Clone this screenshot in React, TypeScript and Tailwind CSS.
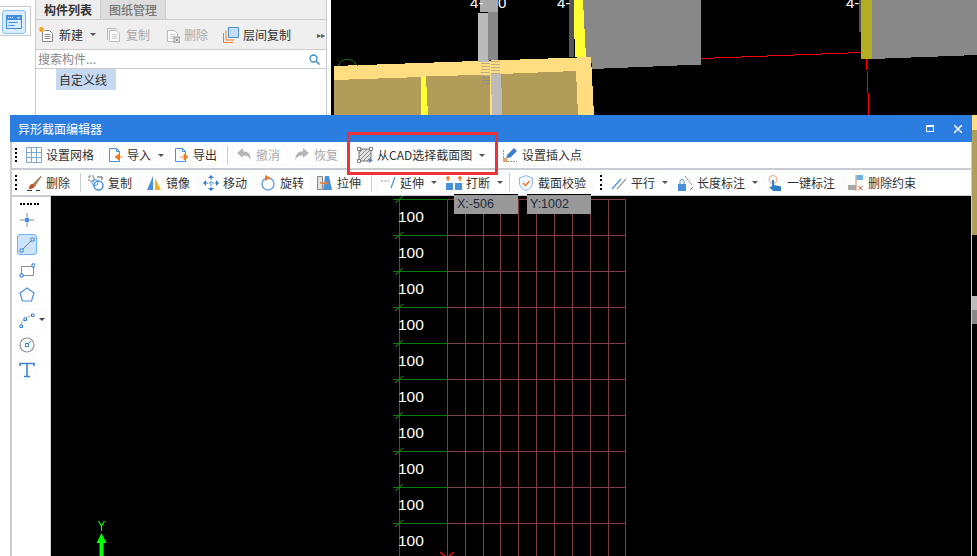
import type { ReactNode } from "react";

const Svg = ({ children, w = 16, h = 16 }: { children: ReactNode; w?: number; h?: number }) => (
  <svg width={w} height={h} viewBox={`0 0 ${w} ${h}`} fill="none" className="shrink-0">
    {children}
  </svg>
);

const blue = "#4a90d9";
const orange = "#f47b20";
const grey = "#8a9097";

const Page = ({ left }: { left?: boolean }) => (
  <Svg>
    <path d="M2.500 1.500h7l3 3v10h-10z" fill="#fff" stroke={blue} />
    <path d="M9.500 1.500v3h3" stroke={blue} />
    {left ? (
      <path d="M16 10h-5M8 10l4-3v6z" fill={orange} stroke={orange} strokeWidth=".8" />
    ) : (
      <path d="M7 10h5M15 10l-4-3v6z" fill={orange} stroke={orange} strokeWidth=".8" />
    )}
  </Svg>
);

const GreyDoc = ({ mark }: { mark?: "new" | "copy" | "del" }) => (
  <Svg>
    {mark === "copy" && <path d="M1.500 13V1.500H10" stroke="#bbb" />}
    <path d="M3.500 3.500h7l3 3v8h-10z" fill="#fff" stroke={mark === "new" ? "#888" : "#bbb"} />
    <path d="M5.500 7.500h6M5.500 9.500h6M5.500 11.500h6" stroke={mark === "new" ? "#888" : "#ccc"} />
    {mark === "new" && <path d="M0 0h5v5H0z" fill="#f2a32c" stroke="#fff" strokeDasharray="1 1" />}
    {mark === "del" && <path d="M10 10h6v6h-6z M11.500 11.500l3 3M14.500 11.500l-3 3" fill="#ddd" stroke="#999" />}
  </Svg>
);

const icons = {
  grid: (
    <Svg>
      <path d="M.5.5h15v15H.5zM5.500.5v15M10.500.5v15M.5 5.500h15M.5 10.500h15" stroke="#7ba7d6" />
    </Svg>
  ),
  undo: (
    <Svg>
      <path d="M1 6l6-5v3.200c5 0 8 2.800 7.500 9-1-3.500-3.500-4.700-7.500-4.700V11z" fill="#b5b5b5" />
    </Svg>
  ),
  redo: (
    <Svg>
      <path d="M15 6L9 1v3.200c-5 0-8 2.800-7.500 9 1-3.500 3.500-4.700 7.500-4.700V11z" fill="#b5b5b5" />
    </Svg>
  ),
  hatch: (
    <Svg>
      <path d="M2 2h12v12H2z" fill="#e4e4e4" stroke="#777" />
      <path d="M2 6l4-4M2 10l8-8M2 14L14 2M6 14l8-8M10 14l4-4" stroke="#888" />
      <path d="M.5.5h3v3h-3zM12.500.5h3v3h-3zM.5 12.500h3v3h-3z" fill="#fff" stroke="#666" strokeWidth=".8" />
      <path d="M12 11l4 2.500-4 2.500z" fill={blue} />
    </Svg>
  ),
  insert: (
    <Svg>
      <path d="M1.500 3v11.500H15" stroke="#999" strokeDasharray="2 1" />
      <path d="M4 11l1.500-3.500L12 1l3 3-6.500 6.500z" fill="#3f7fc9" />
      <path d="M1 11h4v4H1z" fill="#e8a070" />
    </Svg>
  ),
  brush: (
    <Svg>
      <path d="M15 1L7 9l2 2 6-9z" fill="#b08a55" stroke="#7d6238" strokeWidth=".5" />
      <path d="M7 9c-3 0-4 2-4 5 2 0 5-.5 6-3z" fill="#c4532b" />
      <path d="M1 15.500h5M10 15.500h4" stroke="#333" />
    </Svg>
  ),
  copy: (
    <Svg>
      <path d="M1 1h5v5H1z" stroke="#777" strokeDasharray="2 1" />
      <circle cx="10.500" cy="10.500" r="4.500" stroke={blue} strokeWidth="1.500" />
      <circle cx="7" cy="7.500" r="3" stroke={blue} />
      <path d="M9 2h5v3" stroke="#555" />
    </Svg>
  ),
  mirror: (
    <Svg>
      <path d="M7 1v14H1z" fill={blue} />
      <path d="M9 3v12h6z" fill="#eeb32b" />
    </Svg>
  ),
  move: (
    <Svg>
      <path d="M8 0l3 3H5zM8 16l3-3H5zM0 8l3-3v6zM16 8l-3-3v6z" fill="#2f7fd2" />
      <path d="M8 3v10M3 8h10" stroke="#2f7fd2" strokeDasharray="2 1" />
    </Svg>
  ),
  rotate: (
    <Svg>
      <circle cx="8" cy="9" r="6" stroke="#6aa5e0" strokeWidth="1.500" />
      <path d="M5 0l6 3-6 3z" fill={orange} />
    </Svg>
  ),
  stretch: (
    <Svg>
      <path d="M.5 1.500h5v13h-5z" fill="#e2e2e2" stroke="#888" />
      <path d="M8 1h4l3 14H6z" fill="#4a90d9" />
      <path d="M3 8h7" stroke={orange} strokeWidth="1.500" />
      <path d="M8 5l3 3-3 3z" fill={orange} />
    </Svg>
  ),
  extend: (
    <Svg>
      <path d="M1 6h8" stroke="#888" strokeDasharray="2 1.500" />
      <path d="M15 2L11 13" stroke={blue} strokeWidth="1.200" />
    </Svg>
  ),
  cut: (
    <Svg>
      <path d="M0 8h7v7H0zM9 8h7v7H9z" fill={blue} />
      <path d="M2 1v5M0 3h4M14 1v5M12 3h4" stroke={orange} strokeWidth="1.500" />
    </Svg>
  ),
  shield: (
    <Svg>
      <path d="M8 .5l6.500 2.500v5c0 4-3 6.500-6.500 7.500C4.500 14.500 1.500 12 1.500 8V3z" fill="#eef5fd" stroke="#8bb6e6" />
      <path d="M5 8l2.500 2.500L11.500 6" stroke={orange} strokeWidth="1.500" />
    </Svg>
  ),
  parallel: (
    <Svg>
      <path d="M1 14L10 4" stroke={blue} strokeWidth="1.300" />
      <path d="M6 14l9-10" stroke="#9a9a9a" strokeWidth="1.300" />
    </Svg>
  ),
  lock: (
    <Svg>
      <path d="M1 9h8v7H1z" fill={blue} />
      <path d="M3 9V6.500a2 2 0 014 0V9" stroke={blue} />
      <path d="M8 1l7 9" stroke="#777" strokeDasharray="2 1" />
      <path d="M13 15l3-3" stroke="#777" />
    </Svg>
  ),
  hand: (
    <Svg>
      <circle cx="6" cy="4.500" r="4" stroke="#eda27a" />
      <path d="M5 5h2v5l7 1.500V16H6l-4-4 3-.5z" fill="#2f7fc4" />
    </Svg>
  ),
  flag: (
    <Svg>
      <path d="M8 0v16" stroke="#d9813a" />
      <path d="M8.500 0H15v5H8.500z" fill="#6fb0ee" />
      <path d="M0 10h8v5H0z" fill="#a9a9a9" />
      <path d="M10.500 11l4 4M14.500 11l-4 4" stroke="#d8352c" />
    </Svg>
  ),
};

const Arrow = () => (
  <span className="ml-[7px] h-0 w-0 border-x-[3px] border-t-[3px] border-x-transparent border-t-[#555]" />
);

type BtnProps = {
  icon: ReactNode;
  label: string;
  arrow?: boolean;
  off?: boolean;
  className: string;
};

const Btn = ({ icon, label, arrow, off, className }: BtnProps) => (
  <div className={`flex h-[21px] shrink-0 items-center rounded-[3px] border border-[#f9f9f9] ${className}`}>
    {icon}
    <span className={`ml-[4px] whitespace-nowrap text-xs leading-none ${off ? "text-[#aaa]" : "text-[#333]"}`}>{label}</span>
    {arrow && <Arrow />}
  </div>
);

const Grip = () => (
  <div className="ml-[3px] mr-[3px] flex h-[15px] w-[2px] shrink-0 flex-col justify-between">
    {[0, 1, 2, 3].map((i) => (
      <span key={i} className="h-[2px] w-[2px] bg-black" />
    ))}
  </div>
);

const Sep = ({ className = "" }: { className?: string }) => <span className={`mx-px h-[19px] w-px shrink-0 bg-[#ccc] ${className}`} />;

const LeftTool = ({ children, active, wide }: { children: ReactNode; active?: boolean; wide?: boolean }) => (
  <div
    className={`flex h-[21px] items-center rounded-[3px] border pl-[1px] ${wide ? "w-[29px]" : "w-[20px]"} ${
      active ? "border-[#6db2f5] bg-[#cce4ff]" : "border-[#f9f9f9]"
    }`}
  >
    {children}
  </div>
);

const Background3D = () => (
  <svg viewBox="331 0 646 556" className="h-[556px] w-[646px] bg-black" shapeRendering="crispEdges">
    <path d="M334 66L591 57L594 115H334z" fill="#ffdd80" />
    <path d="M334 80L421 77V115H334zM426 76.500L490 74.500V115H426zM501 74L576 71L578 115H501z" fill="#b19d59" />
    <path d="M421 77h5l2 38h-7z" fill="#ffff33" />
    <path d="M480 0h18v12h-18z" fill="#aaa" />
    <path d="M478 13h11v49h-11z" fill="#bbb" />
    <path d="M488 12h10v48h-10z" fill="#888" />
    <path d="M491 74h10l1.500 41H492z" fill="#bbb" />
    {[63, 66, 69, 72, 75].map((y) => (
      <path key={y} d={`M481 ${y}h9M491 ${y - 2}h9`} stroke="#bcae8a" />
    ))}
    {[77, 80, 83].map((y) => (
      <path key={y} d={`M482 ${y}h8`} stroke="#8d8d8d" />
    ))}
    <path d="M569 0h5v57h-5z" fill="#555" />
    <path d="M583 0h118v64.500L592 69L591 57H586z" fill="#888" />
    <path d="M573.500 0H583L586 57H575z" fill="#ffff33" />
    <path d="M701 58.500L861 52.500" stroke="#f00" strokeWidth="1" />
    <path d="M866.500 59L869 115" stroke="#f00" strokeWidth="1" />
    <path d="M859 0h3v32h-3z" fill="#555" />
    <path d="M872 0H977V55L872 59z" fill="#888" />
    <path d="M861 0H872V59H861z" fill="#b2ad22" />
    <path d="M338 66c3-5 7-7 10-7s6 2 10 7" stroke="#0a6a0a" fill="none" />
    <path d="M972 115h5v15h-5z" fill="#ffdd80" />
    <path d="M972 130h5v105h-5z" fill="#b19d59" />
    <path d="M972 296h5v14h-5z" fill="#bbb" />
    <path d="M972 310h5v14h-5z" fill="#888" />
    <g fill="#fff" fontFamily="Liberation Sans, sans-serif" fontSize="15" shapeRendering="auto">
      <text x="470" y="8">4-</text>
      <text x="498" y="8">0</text>
      <text x="557" y="8">4-</text>
      <text x="846" y="8">4-</text>
    </g>
  </svg>
);

const rows = [0, 1, 2, 3, 4, 5, 6, 7, 8, 9];
const cols = [447, 465, 483, 500, 518, 536, 554, 572, 590, 608, 625];

const Canvas = () => (
  <svg viewBox="51 196 920 360" className="h-[360px] w-[920px] bg-black">
    <g shapeRendering="crispEdges">
      {rows.map((i) => (
        <path key={i} d={`M447 ${199.5 + 36 * i}H625`} stroke="#803c44" />
      ))}
      {cols.map((x) => (
        <path key={x} d={`M${x + 0.5} 199V556`} stroke="#803c44" />
      ))}
      <path d="M399.500 199V556" stroke="#008000" />
      {rows.map((i) => (
        <path key={i} d={`M393 ${199.5 + 36 * i}H447`} stroke="#008000" />
      ))}
    </g>
    {rows.map((i) => (
      <g key={i}>
        <path d={`M395 ${203 + 36 * i}L403 ${196 + 36 * i}`} stroke="#1d9a1d" />
        <text x="398" y={222 + 36 * i} fill="#fff" fontSize="15.500" fontFamily="Liberation Sans, sans-serif">
          100
        </text>
      </g>
    ))}
    <path d="M440 552l5 4M454 552l-5 4" stroke="#f00" strokeWidth="1.500" />
    <path d="M99.500 543h4v13h-4zM101.500 533l5 10h-10z" fill="#00ff00" />
    <path d="M101.500 531v-5M101.500 526l-3-5M101.500 526l3-5" stroke="#00ff00" strokeWidth="1.200" fill="none" />
  </svg>
);

const Editor = () => (
  <div className="absolute left-[10px] top-[115px] flex h-[441px] w-[962px] flex-col border-r border-l-2 border-[#c8ccd0] bg-[#c8ccd0]">
    <div className="-ml-[2px] -mr-px flex h-[27px] shrink-0 items-center bg-[#2b7de0] pl-[8px] pr-[10px] text-white">
      <span className="text-xs leading-none">异形截面编辑器</span>
      <span className="ml-auto h-[7px] w-[8px] border border-t-2 border-white" />
      <svg width="8" height="8" viewBox="0 0 8 8" className="ml-[20px]">
        <path d="M0 0l8 8M8 0L0 8" stroke="#fff" strokeWidth="1.500" />
      </svg>
    </div>

    <div className="flex h-[26px] shrink-0 items-center gap-[2px] bg-white">
      <Grip />
      <Btn className="w-[79px] pl-[3px]" icon={icons.grid} label="设置网格" />
      <Btn className="w-[64px] pl-[3px]" icon={<Page left />} label="导入" arrow />
      <Btn className="w-[55px] pl-[3px]" icon={<Page />} label="导出" />
      <Sep />
      <Btn className="ml-px w-[55px] pl-[3px]" icon={icons.undo} label="撤消" off />
      <Btn className="ml-px w-[56px] pl-[3px]" icon={icons.redo} label="恢复" off />
      <Btn className="ml-[3px] w-[142px] pl-[5px]" icon={icons.hatch} label="从CAD选择截面图" arrow />
      <Sep className="ml-0" />
      <Btn className="w-[90px] pl-[2px]" icon={icons.insert} label="设置插入点" />
    </div>

    <div className="mt-[2px] flex h-[25px] shrink-0 items-center gap-[2px] bg-white">
      <Grip />
      <Btn className="w-[55px] pl-[3px]" icon={icons.brush} label="删除" />
      <Sep />
      <Btn className="w-[56px] pl-[3px]" icon={icons.copy} label="复制" />
      <Btn className="w-[55px] pl-[3px]" icon={icons.mirror} label="镜像" />
      <Btn className="w-[55px] pl-[3px]" icon={icons.move} label="移动" />
      <Btn className="w-[55px] pl-[3px]" icon={icons.rotate} label="旋转" />
      <Btn className="w-[55px] pl-[3px]" icon={icons.stretch} label="拉伸" />
      <Sep />
      <Btn className="ml-px w-[63px] pl-[3px]" icon={icons.extend} label="延伸" arrow />
      <Btn className="ml-px w-[64px] pl-[3px]" icon={icons.cut} label="打断" arrow />
      <Sep />
      <Btn className="ml-px w-[80px] pl-[3px]" icon={icons.shield} label="截面校验" />
      <div className="ml-[1px]">
        <Grip />
      </div>
      <Btn className="w-[64px] pl-[3px]" icon={icons.parallel} label="平行" arrow />
      <Btn className="w-[87px] pl-[3px]" icon={icons.lock} label="长度标注" arrow />
      <Btn className="ml-px w-[79px] pl-[3px]" icon={icons.hand} label="一键标注" />
      <Btn className="w-[80px] pl-[3px]" icon={icons.flag} label="删除约束" />
    </div>

    <div className="mt-px flex min-h-0 flex-1">
      <div className="mr-px mt-px flex w-[38px] flex-col items-start gap-[4px] bg-white pl-[5px]">
        <div className="mt-[6px] flex w-[22px] justify-between pl-[3px]">
          {[0, 1, 2, 3, 4, 5].map((i) => (
            <span key={i} className="h-[2px] w-[2px] bg-black" />
          ))}
        </div>
        <LeftTool>
          <Svg>
            <path d="M8 1v4M8 11v4M1 8h4M11 8h4" stroke="#888" />
            <circle cx="8" cy="8" r="2.500" fill={blue} />
          </Svg>
        </LeftTool>
        <LeftTool active>
          <Svg>
            <path d="M2.500 13.500L13.500 2.500" stroke="#777" />
            <path d="M1 12h3v3H1zM12 1h3v3h-3z" fill="#fff" stroke="#2f7fd2" />
          </Svg>
        </LeftTool>
        <LeftTool>
          <Svg>
            <path d="M2.500 4.500h12v9h-12z" stroke="#8a9097" />
            <path d="M1 12h3v3H1zM13 2h3v3h-3z" fill="#fff" stroke="#2f7fd2" />
          </Svg>
        </LeftTool>
        <LeftTool>
          <Svg>
            <path d="M8 1l7 5-2.500 8h-9L1 6z" stroke={blue} strokeWidth="1.200" />
          </Svg>
        </LeftTool>
        <LeftTool wide>
          <Svg>
            <path d="M2 14c0-4 2-8 12-11" stroke="#aaa" />
            <path d="M1 13h2.500v2.500H1zM5 6h2.500v2.500H5zM12.500 2H15v2.500h-2.500z" fill="#fff" stroke="#2f7fd2" />
          </Svg>
          <span className="ml-[4px] h-0 w-0 border-x-[3px] border-t-[3px] border-x-transparent border-t-[#444]" />
        </LeftTool>
        <LeftTool>
          <Svg>
            <circle cx="8" cy="8" r="7" stroke={grey} strokeWidth="1.200" />
            <path d="M8 8l4-4" stroke={blue} />
            <path d="M6.500 6.500h3v3h-3z" fill="#fff" stroke="#2f7fd2" />
          </Svg>
        </LeftTool>
        <LeftTool>
          <Svg>
            <path d="M1 4V1.500h14V4M8 1.500V14.500M5 14.500h6" stroke="#3b82cf" strokeWidth="1.600" />
          </Svg>
        </LeftTool>
      </div>
      <Canvas />
    </div>
  </div>
);

const CoordTip = ({ label, className }: { label: string; className: string }) => (
  <div className={`absolute top-[194px] flex h-[20px] w-[64px] items-center border-t border-black bg-[#999] pl-[3px] font-['Liberation_Sans',sans-serif] text-[12.5px] leading-none text-[#1f2a35] ${className}`}>
    {label}
  </div>
);

export default function App() {
  return (
    <div className="relative flex h-[556px] w-[977px] overflow-hidden bg-white font-['Noto_Sans_CJK_SC','Liberation_Sans',sans-serif]">
      <div className="w-[35px] shrink-0">
        <div className="mr-[4px] mt-[6px] h-[30px] border-y border-r border-[#c8ccd0]">
          <div className="ml-[2px] mt-[3px] flex h-[24px] w-[24px] items-center justify-center rounded-[3px] border border-[#85bdf5] bg-[#d8ecff]">
            <svg width="16" height="14" viewBox="0 0 16 14">
              <path d="M0 0h16v5H0z" fill="#3f8de0" />
              <path d="M.5 .5h15v13H.5z" fill="none" stroke="#3f8de0" />
              <path d="M2 2h1v1H2zM4 2h1v1H4zM6 2h1v1H6zM11 2h3L12.500 4z" fill="#fff" />
              <path d="M2.500 7.500h9M2.500 10.500h6" stroke="#3f8de0" />
            </svg>
          </div>
        </div>
      </div>

      <div className="flex h-full w-[292px] shrink-0 flex-col border-x border-[#c8ccd0]">
        <div className="flex h-[20px] shrink-0 border-b border-[#ccc] bg-[#eee] text-xs leading-none">
          <div className="flex w-[65px] items-center justify-center border-r border-[#ccc] font-bold text-[#333]">构件列表</div>
          <div className="flex w-[65px] items-center justify-center border-r border-[#ccc] bg-[#ddd] font-medium text-[#777]">图纸管理</div>
        </div>
        <div className="flex h-[30px] shrink-0 items-center border-b border-[#ccc] bg-[#efefef] pl-[3px] text-xs leading-none">
          <GreyDoc mark="new" />
          <span className="ml-[4px] text-[#333]">新建</span>
          <Arrow />
          <span className="ml-[10px]"><GreyDoc mark="copy" /></span>
          <span className="ml-[4px] text-[#aaa]">复制</span>
          <span className="ml-[14px]"><GreyDoc mark="del" /></span>
          <span className="ml-[4px] text-[#aaa]">删除</span>
          <svg width="16" height="16" viewBox="0 0 16 16" className="ml-[15px]">
            <path d="M.5 6v9.500H10M3 3.500v9.500h8" stroke={orange} fill="none" />
            <path d="M5.500.5h10v10h-10z" fill="#c5dcf5" stroke={blue} />
          </svg>
          <span className="ml-[4px] text-[#333]">层间复制</span>
          <span className="ml-auto mr-[1px] text-[8px] text-[#555]">▸▸</span>
        </div>
        <div className="flex h-[19px] shrink-0 items-center border-b border-[#ccc] bg-white pl-[2px] pr-[6px] text-xs leading-none text-[#888]">
          <span>搜索构件...</span>
          <svg width="11" height="11" viewBox="0 0 11 11" className="ml-auto">
            <circle cx="4.500" cy="4.500" r="3.500" stroke="#2e8bc8" strokeWidth="1.300" fill="none" />
            <path d="M7 7l3.500 3.500" stroke="#2e8bc8" strokeWidth="1.500" />
          </svg>
        </div>
        <div className="ml-[20px] flex h-[21px] w-[60px] shrink-0 items-center bg-[#c5d9f1] pl-[3px] text-xs leading-none text-[#333]">
          自定义线
        </div>
      </div>

      <div className="w-[4px] shrink-0" />
      <Background3D />

      <Editor />
      <div className="absolute left-[347px] top-[132px] h-[43px] w-[151px] border-[3px] border-[#ee3338]" />
      <CoordTip label="X:-506" className="left-[454px]" />
      <CoordTip label="Y:1002" className="left-[527px]" />
    </div>
  );
}
